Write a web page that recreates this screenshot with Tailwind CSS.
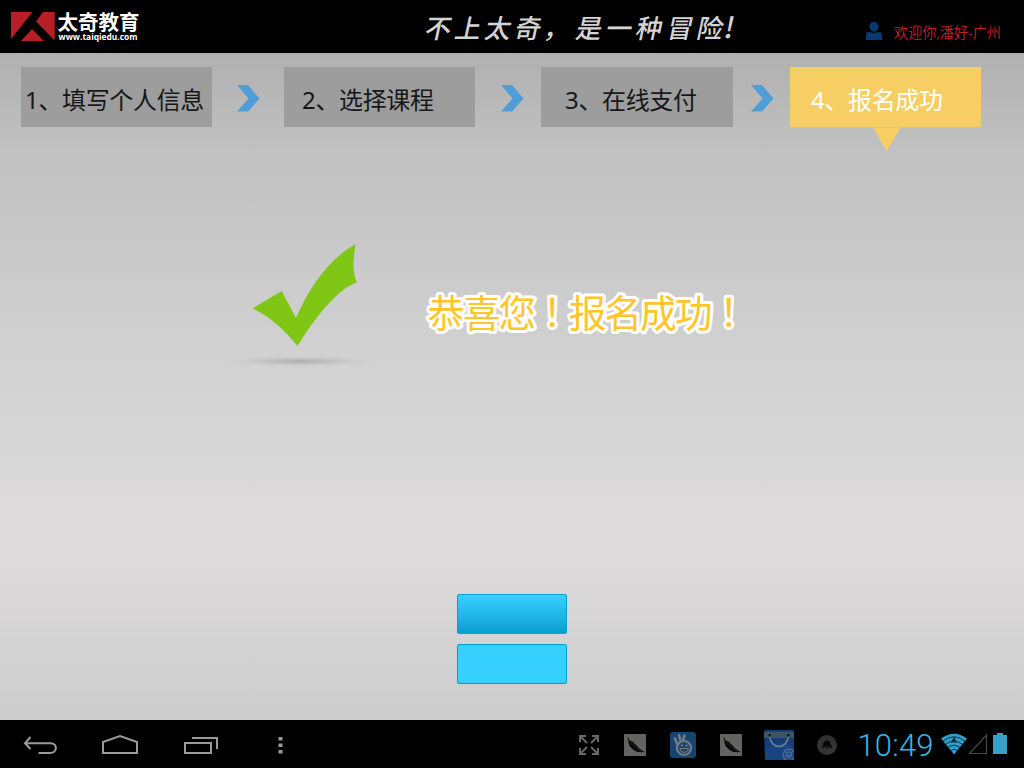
<!DOCTYPE html>
<html lang="zh-CN">
<head>
<meta charset="utf-8">
<title>太奇教育</title>
<script src="https://cdn.jsdelivr.net/npm/@tailwindcss/browser@4"></script>
</head>
<body class="w-[1024px] h-[768px] overflow-hidden flex flex-col bg-black font-['Noto_Sans','Noto_Sans_CJK_SC',sans-serif]">
<header class="h-[53px] shrink-0 bg-black flex">
  <svg class="w-[160px] h-[53px]" viewBox="0 0 160 53">
    <path fill="#b81e25" d="M11 12H32.500L11 39ZM43 12H54.700V40.500L36 21.500ZM21 41L32 29L44 41Z"/>
    <g fill="#fff">
      <text x="57.500" y="29.500" font-size="20.500" font-weight="700" textLength="82" font-family="Noto Sans CJK SC">太奇教育</text>
      <text x="58.500" y="39.800" font-size="9.500" font-weight="700" textLength="79" lengthAdjust="spacingAndGlyphs" font-family="Open Sans">www.taiqiedu.com</text>
    </g>
  </svg>
  <svg class="w-[700px] h-[53px]" viewBox="160 0 700 53">
    <g fill="#d4d4d4" font-size="26" font-weight="500" font-family="Noto Sans CJK SC" transform="translate(7.500 0) skewX(-12)">
      <text x="424 454 484 514 543" y="38">不上太奇，</text>
      <text x="575 605 635 666 696" y="38">是一种冒险</text>
      <text x="723" y="38" font-size="29">!</text>
    </g>
  </svg>
  <div class="flex items-center pt-[11px] pl-[6px]">
    <svg class="w-[16px] h-[20px]" viewBox="0 0 16 20"><path fill="#053a72" d="M8 0C11 0 13 2.500 12.500 5.500C12 8 10 9.500 8 9.500S4 8 3.500 5.500C3 2.500 5 0 8 0ZM0 18V13Q0 10 3 10H4Q8 12 12 10H13Q16 10 16 13V18Z"/></svg>
    <svg class="ml-[12px] w-[112px] h-[22px] overflow-visible" viewBox="0 0 112 22"><text x="0" y="17" fill="#c02228" font-size="14.500" textLength="107" lengthAdjust="spacingAndGlyphs" font-family="Noto Sans, Noto Sans CJK SC" font-weight="350">欢迎你,潘好-广州</text></svg>
  </div>
</header>

<main class="h-[667px] shrink-0 bg-[linear-gradient(to_bottom,#b0b0b0_0%,#c0c0c0_14%,#cccccc_35%,#d5d5d5_54%,#dddbdc_70%,#dbd9da_79%,#cecece_97%,#cccccc_100%)]">
  <nav class="flex pl-[21px] pt-[14px] text-[24px] tracking-[-0.35px] text-[#171717] whitespace-nowrap leading-[60px]">
    <div class="w-[191px] h-[60px] bg-[#9d9d9d] pl-[4px] pt-[3px]">1、填写个人信息</div>
    <svg class="w-[23px] h-[27px] ml-[25px] mr-[24px] mt-[18px]" viewBox="0 0 23 27"><path fill="#509ed8" d="M0 0H11L22.500 13.500L11 26.500H0L11.500 13.500Z"/></svg>
    <div class="w-[191px] h-[60px] bg-[#9d9d9d] pl-[18px] pt-[3px]">2、选择课程</div>
    <svg class="w-[23px] h-[27px] ml-[26px] mr-[17px] mt-[18px]" viewBox="0 0 23 27"><path fill="#509ed8" d="M0 0H11L22.500 13.500L11 26.500H0L11.500 13.500Z"/></svg>
    <div class="w-[192px] h-[60px] bg-[#9d9d9d] pl-[24px] pt-[3px]">3、在线支付</div>
    <svg class="w-[23px] h-[27px] ml-[18px] mr-[16px] mt-[18px]" viewBox="0 0 23 27"><path fill="#509ed8" d="M0 0H11L22.500 13.500L11 26.500H0L11.500 13.500Z"/></svg>
    <div class="relative w-[191px] h-[60px] bg-[#f6ce63] text-white pl-[21px] pt-[3px]">4、报名成功
      <svg class="absolute left-[83px] top-[60px] w-[28px] h-[25px]" viewBox="0 0 28 25"><path fill="#f6ce63" d="M0 .5H27.500L13.700 24Z"/><path d="M0 .5H27.500" stroke="#e0c47a"/></svg>
    </div>
  </nav>
  <section class="flex pl-[210px] pt-[103px]">
    <svg class="w-[200px] h-[150px]" viewBox="0 0 200 150">
      <defs><radialGradient id="shade"><stop offset="0" stop-color="#adadad"/><stop offset=".4" stop-color="#b8b8b8" stop-opacity=".65"/><stop offset="1" stop-color="#cfcfcf" stop-opacity="0"/></radialGradient></defs>
      <ellipse cx="90" cy="131.300" rx="82" ry="6" fill="url(#shade)"/>
      <path fill="#7fc714" d="M42.500 78.500L71.700 61L86 88Q109 35 145.500 14Q141 42 147 52.500C128 58 104 89 87.500 116Q66 89 42.500 78.500Z"/>
    </svg>
    <svg class="ml-[5px] mt-[50px] w-[340px] h-[65px]" viewBox="415 280 340 65">
      <g fill="#ffc52b" stroke="#fff" stroke-width="6" stroke-linejoin="round" paint-order="stroke" font-size="37.500" font-weight="400" font-family="Noto Sans CJK SC">
        <text x="427.500 463 498.500" y="327">恭喜您</text>
        <text x="533.500" y="326" font-family="Noto Sans CJK TC" lang="zh-TW">！</text>
        <text x="569 604.500 640 675" y="327">报名成功</text>
        <text x="710" y="326" font-family="Noto Sans CJK TC" lang="zh-TW">！</text>
      </g>
    </svg>
  </section>
  <div class="flex flex-col items-center gap-[10px] pt-[214px]">
    <button aria-label="确定" class="w-[110px] h-[40px] rounded-[2px] border border-[#059fd1] bg-linear-to-b from-[#37d1ff] to-[#059fd1]"></button>
    <button aria-label="返回" class="w-[110px] h-[40px] rounded-[2px] border border-[#059fd1] bg-[#37d1ff]"></button>
  </div>
</main>

<footer class="h-[48px] shrink-0 bg-black flex items-center">
  <svg class="ml-[22px] w-[36px] h-[24px]" viewBox="22 732 36 24" fill="none" stroke="#999a99" stroke-width="2"><path d="M30.500 737L25 743.200L30.500 749M25 743.200H50.500C58 743.200 57.500 753 50 753H38.500"/></svg>
  <svg class="ml-[44px] w-[36px] h-[24px]" viewBox="102 732 36 24" fill="none" stroke="#999a99" stroke-width="2"><path d="M103 753V742L120 736L137 742V753Z"/></svg>
  <svg class="ml-[46px] w-[36px] h-[24px]" viewBox="184 732 36 24" fill="none" stroke="#999a99" stroke-width="2"><path d="M185 743H211V753H185ZM192 738H217V749"/></svg>
  <svg class="ml-[57px] w-[8px] h-[24px]" viewBox="277 732 8 24" fill="#999a99"><path d="M278.500 737h4v3.500h-4zM278.500 743.500h4v3.500h-4zM278.500 750h4v3.500h-4z"/></svg>

  <svg class="ml-[294px] mt-[2px] w-[20px] h-[20px]" viewBox="0 0 20 20" fill="none" stroke="#686868" stroke-width="2"><path d="M1 7V1H7M1 1L8 8M13 1H19V7M19 1L12 8M1 13V19H7M1 19L8 12M19 13V19H13M19 19L12 12"/></svg>
  <svg class="ml-[25px] mt-[2px] w-[22px] h-[22px]" viewBox="0 0 22 22"><rect width="22" height="22" rx="1" fill="#636462"/><path fill="#070907" d="M3 3Q5 4 5 6Q9 7 12 11Q15 15 20.500 18Q13 19.500 8 14.500Q4 11 4.500 7Z"/><path d="M6.500 8.500Q9 10 11 12.500T17 17" fill="none" stroke="#62645f" stroke-width=".9" stroke-dasharray="1 2"/></svg>
  <svg class="ml-[24px] mt-[2px] w-[26px] h-[26px]" viewBox="0 0 26 26"><rect width="26" height="26" rx="3" fill="#174572"/><g fill="none" stroke="#737b7e" stroke-width="2.600" stroke-linecap="round"><circle cx="14" cy="16" r="7" stroke-width="2.200"/><path d="M7.500 13L5 6.500M10.500 9L9 3M13 8L14.500 3.500"/></g><circle cx="12" cy="13.500" r="1" fill="#858a8c"/><circle cx="16.500" cy="13.500" r="1" fill="#858a8c"/><path d="M10 16.500H18.500Q18 20.500 14.200 20.500T10 16.500" fill="#174572" stroke="#737b7e"/></svg>
  <svg class="ml-[24px] mt-[2px] w-[22px] h-[22px]" viewBox="0 0 22 22"><rect width="22" height="22" rx="1" fill="#636462"/><path fill="#070907" d="M3 3Q5 4 5 6Q9 7 12 11Q15 15 20.500 18Q13 19.500 8 14.500Q4 11 4.500 7Z"/><path d="M6.500 8.500Q9 10 11 12.500T17 17" fill="none" stroke="#62645f" stroke-width=".9" stroke-dasharray="1 2"/></svg>
  <svg class="ml-[22px] mt-[2px] w-[30px] h-[30px]" viewBox="0 0 30 30"><path fill="#153e79" d="M0 2Q0 0 2 0H28Q30 0 30 2V30H1Z"/><path d="M0 2H30V8H0Z" fill="#3b5466"/><path d="M1 20Q15 8 29 17V30H1Z" fill="#1c4a8c" opacity=".6"/><path d="M5.500 6C7 20 23 20 24.500 6" fill="none" stroke="#717e8b" stroke-width="1.500"/><path d="M4.500 4h2.500v2.500H4.500zM23 4h2.500v2.500H23z" fill="#101c28"/><g fill="none" stroke="#476b98" stroke-width="1.500"><circle cx="25" cy="25" r="5.800"/><path d="M22 25.500H27.500Q28 22 25 22T22 25T27 27.500"/></g></svg>
  <svg class="ml-[23px] mt-[2px] w-[20px] h-[20px]" viewBox="0 0 20 20"><defs><linearGradient id="orb" x2="0" y2="1"><stop stop-color="#303030"/><stop offset="1" stop-color="#363636"/></linearGradient></defs><circle cx="10" cy="10" r="10" fill="url(#orb)"/><path fill="#080808" d="M6.500 9Q6.500 5.500 10 5.500T13.500 9Q15.500 11 14.500 13Q12.500 13 12 11.500H8Q7.500 13 5.500 13Q4.500 11 6.500 9"/><path d="M8 12h4v1.500H8z" fill="#181818"/></svg>
  <svg class="ml-[20px] w-[78px] h-[40px]" viewBox="857 724 78 40"><text x="857.500" y="756" fill="#33b5e5" font-size="31" textLength="76" lengthAdjust="spacing" font-family="Roboto" font-weight="350">10:49</text></svg>
  <svg class="ml-[5px] w-[28px] h-[24px]" viewBox="940 732 28 24"><path fill="#319fcb" d="M941 738.500Q954 729 967 738.500L954 754.500Z"/><path d="M943 741.200Q954 732.500 965 741.200M945.500 744.400Q954 738 962.500 744.400M948 747.500Q954 743 960 747.500M950.500 750.600Q954 748 957.500 750.600" fill="none" stroke="#04141b" stroke-width=".8"/><path d="M951 742.500L954 736.500L957 742.500Z" fill="#123441"/></svg>
  <svg class="w-[20px] h-[24px]" viewBox="968 732 20 24"><path d="M969.500 753.500H986.500V735Z" fill="none" stroke="#484848" stroke-width="1.200"/></svg>
  <svg class="ml-[5px] w-[14px] h-[24px]" viewBox="993 732 14 24"><path fill="#369fc7" d="M993 735H997V733H1003V735H1007V754H993Z"/></svg>
</footer>
</body>
</html>
